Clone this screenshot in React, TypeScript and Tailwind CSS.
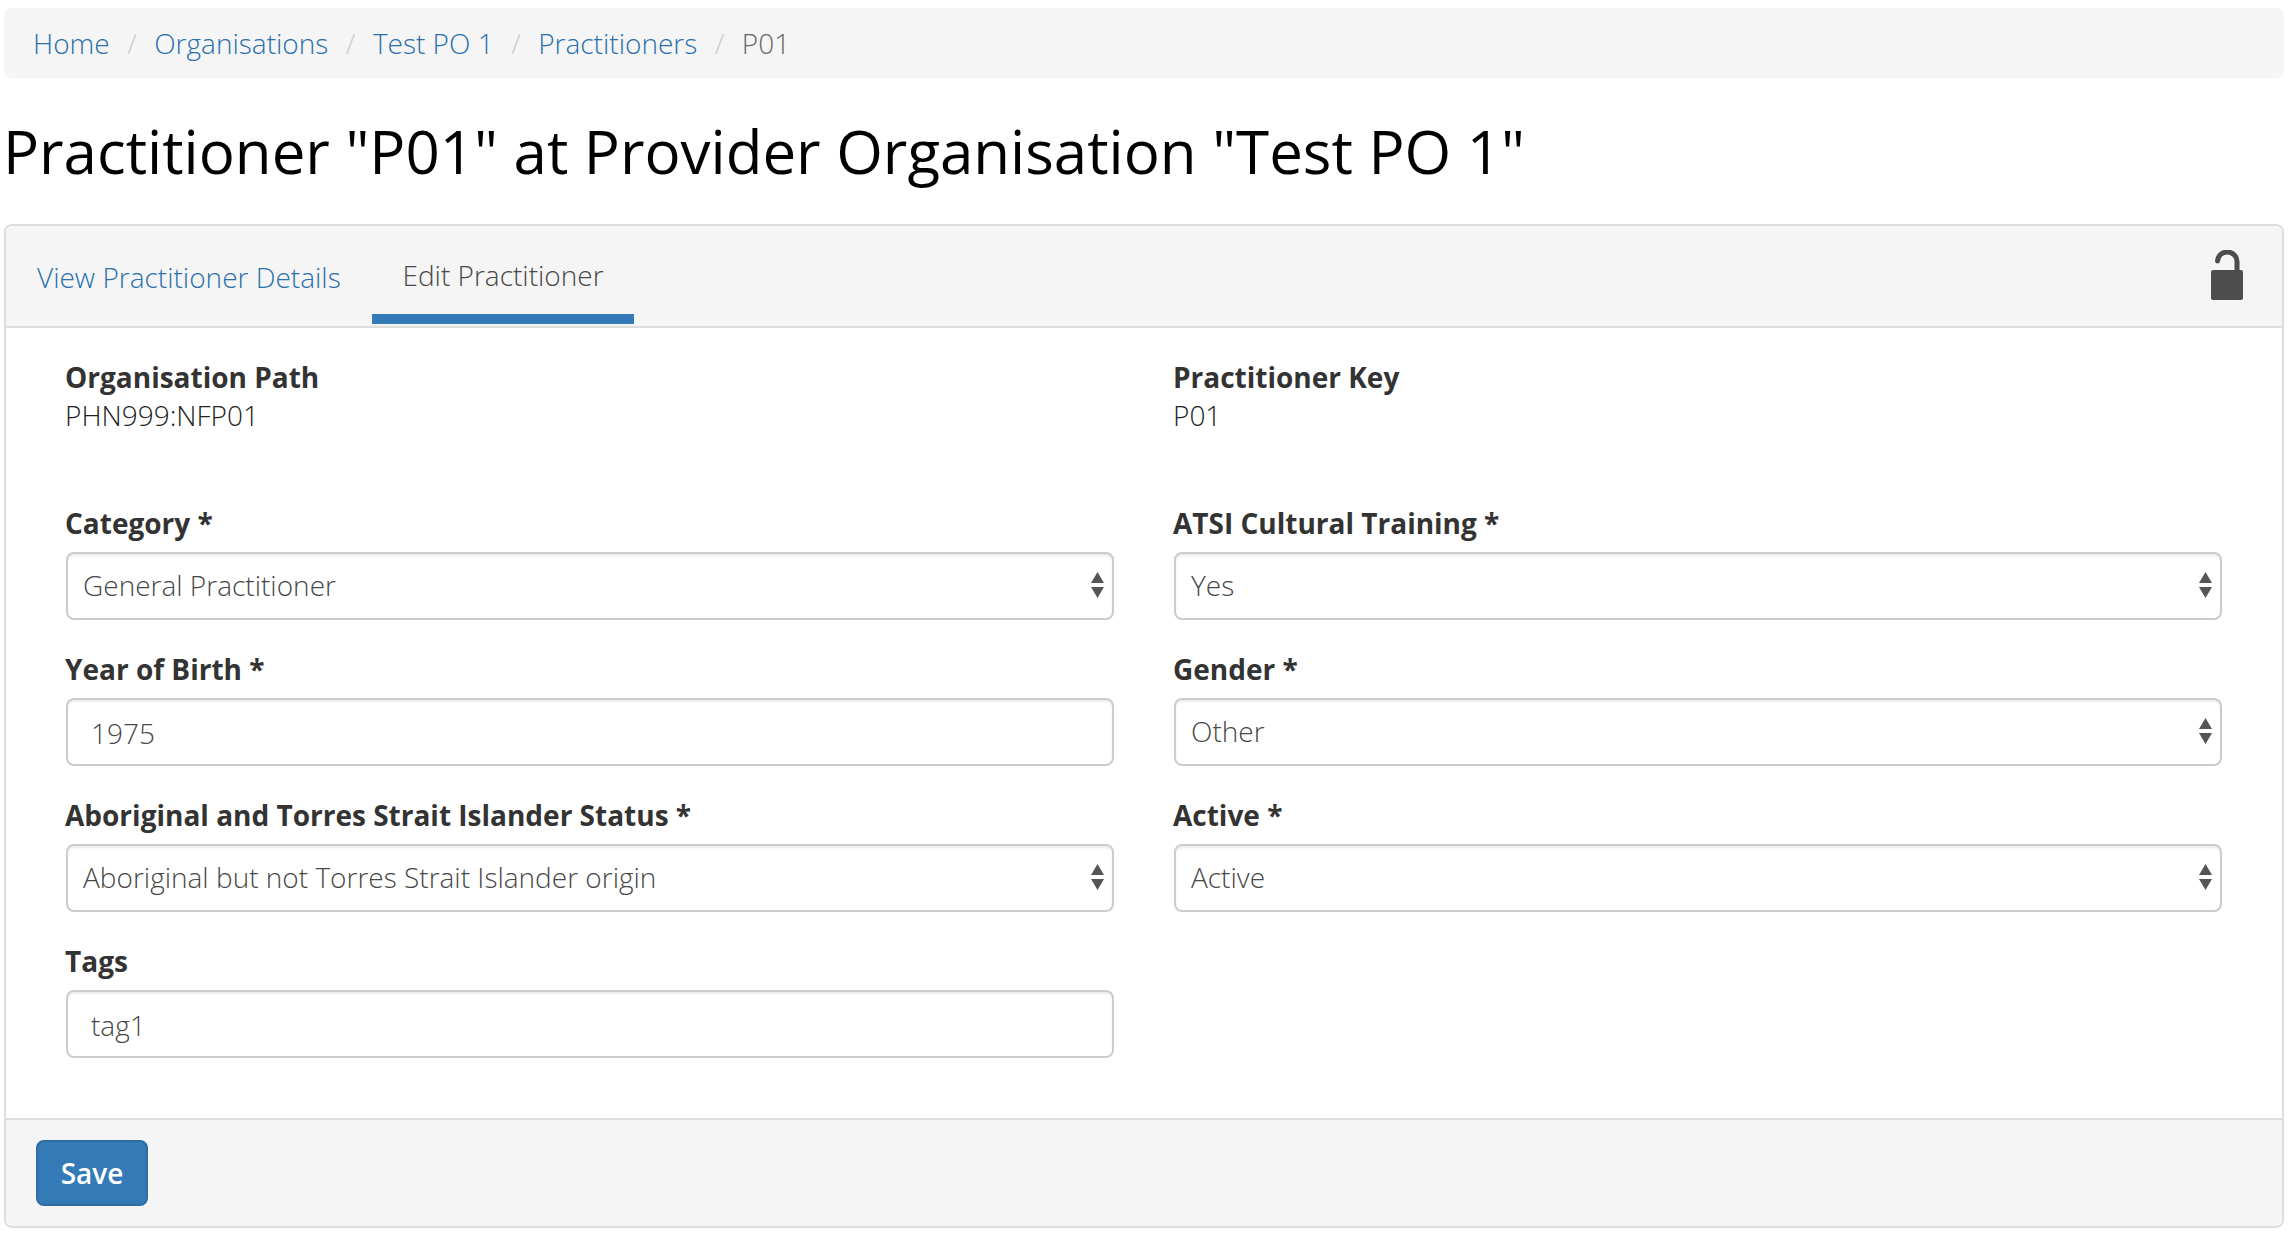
import React from "react";

const font = { fontFamily: '"Open Sans", sans-serif' };

function Label({ children }: { children: React.ReactNode }) {
  return <label className="block h-[44px] -ml-px text-[28px] leading-[40px] font-bold text-[#333]">{children}</label>;
}

const control = "w-full h-[68px] rounded-[8px] border-2 border-[#ccc] bg-white text-[28px] font-light text-[#484848] outline-none shadow-[inset_0_2px_2px_rgba(0,0,0,0.075)]";

function SelectField({ label, value }: { label: string; value: string }) {
  return (
    <div className="h-[146px]">
      <Label>{label}</Label>
      <div className="relative mt-[5px]">
        <select defaultValue={value} className={`${control} appearance-none pl-[15px] pr-[40px] pb-[2px]`}>
          <option>{value}</option>
        </select>
        <svg className="absolute right-[10px] top-[20px] pointer-events-none" width="13" height="26" viewBox="0 0 13 26">
          <path d="M6.5 0 L13 11 L0 11 Z M0 15 L13 15 L6.5 26 Z" fill="#555" />
        </svg>
      </div>
    </div>
  );
}

function InputField({ label, value }: { label: string; value: string }) {
  return (
    <div className="h-[146px]">
      <Label>{label}</Label>
      <input readOnly value={value} className={`${control} mt-[5px] block px-[23px] pt-[2px]`} />
    </div>
  );
}

function Static({ label, value }: { label: string; value: string }) {
  return (
    <div className="h-[146px]">
      <Label>{label}</Label>
      <div className="-ml-px text-[28px] leading-[28px] font-light text-[#222]">{value}</div>
    </div>
  );
}

export default function App() {
  const crumbs = ["Home", "Organisations", "Test PO 1", "Practitioners"];
  return (
    <div style={font} className="bg-white w-[2292px] h-[1238px] overflow-hidden px-[4px] pt-[8px]">
      <nav className="h-[70px] w-[2280px] rounded-[8px] bg-[#f5f5f5] pl-[29px] flex items-center text-[28px] font-light">
        {crumbs.map((c) => (
          <React.Fragment key={c}>
            <a className="text-[#2a70ad]">{c}</a>
            <span className="text-[#ccc] px-[17.5px]">/</span>
          </React.Fragment>
        ))}
        <span className="text-[#666]">P01</span>
      </nav>
      <h1 className="mt-[37px] h-[72px] -ml-px text-[60px] leading-[72px] font-normal text-black">
        Practitioner "P01" at Provider Organisation "Test PO 1"
      </h1>
      <section className="mt-[37px] w-[2280px] h-[1004px] rounded-[8px] border-2 border-[#ddd] flex flex-col overflow-hidden">
        <header className="h-[102px] shrink-0 bg-[#f5f5f5] border-b-2 border-[#ddd] flex items-stretch pl-[31px] pr-[39px]">
          <a className="w-[335px] flex items-center text-[28px] font-light text-[#2a70ad] pt-[2px]">View Practitioner Details</a>
          <div className="w-[262px] flex flex-col items-center">
            <span className="mt-[30px] text-[28px] leading-[38px] font-light text-[#484848]">Edit Practitioner</span>
            <span className="mt-auto mb-[2px] h-[10px] w-full bg-[#337ab7]" />
          </div>
          <svg className="ml-auto mt-[24px]" width="32" height="50" viewBox="0 0 32 50">
            <path d="M6.5 11 A9.75 9.5 0 0 1 26 12 V21" fill="none" stroke="#4d4d4d" strokeWidth="5" strokeLinecap="round" />
            <rect x="0" y="20" width="32" height="30" rx="2" fill="#4d4d4d" />
          </svg>
        </header>
        <div className="flex-1 bg-white grid grid-cols-2 gap-x-[60px] px-[60px] pt-[29px] content-start">
          <div>
            <Static label="Organisation Path" value="PHN999:NFP01" />
            <SelectField label="Category *" value="General Practitioner" />
            <InputField label="Year of Birth *" value="1975" />
            <SelectField label="Aboriginal and Torres Strait Islander Status *" value="Aboriginal but not Torres Strait Islander origin" />
            <InputField label="Tags" value="tag1" />
          </div>
          <div>
            <Static label="Practitioner Key" value="P01" />
            <SelectField label="ATSI Cultural Training *" value="Yes" />
            <SelectField label="Gender *" value="Other" />
            <SelectField label="Active *" value="Active" />
          </div>
        </div>
        <footer className="h-[108px] shrink-0 bg-[#f5f5f5] border-t-2 border-[#ddd] pl-[30px] pt-[20px]">
          <button className="w-[112px] h-[66px] rounded-[8px] bg-[#337ab7] border-2 border-[#2e6da4] text-white text-[28px] font-semibold">Save</button>
        </footer>
      </section>
    </div>
  );
}
